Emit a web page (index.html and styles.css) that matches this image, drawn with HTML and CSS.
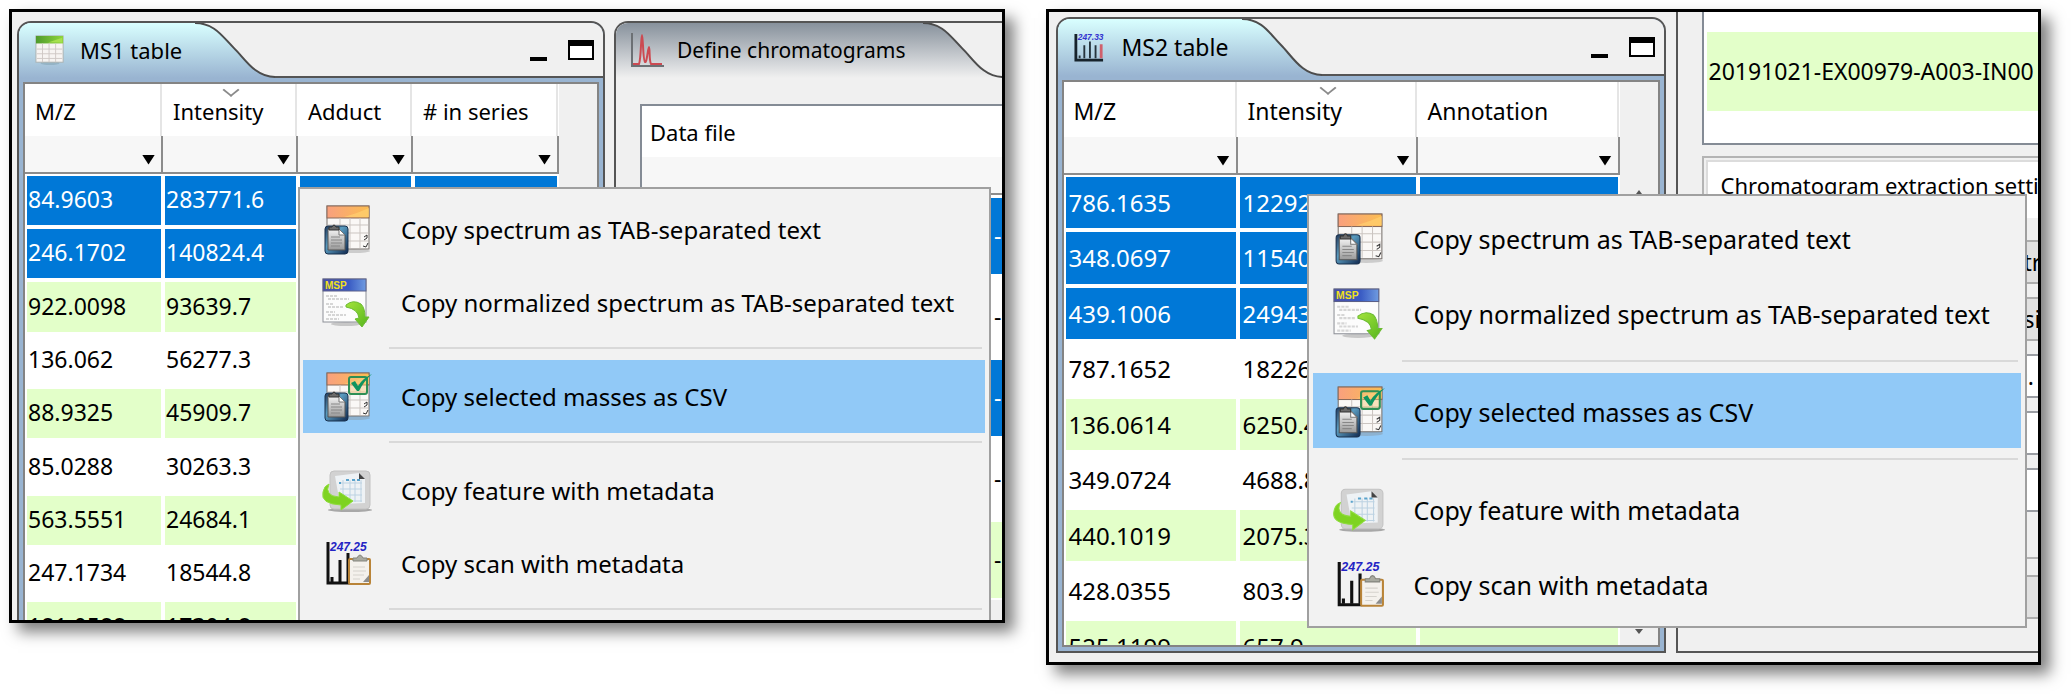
FILE: index.html
```html
<!DOCTYPE html>
<html lang="en">
<head>
<meta charset="utf-8">
<title>Copy selected masses</title>
<link rel="stylesheet" href="styles.css">
</head>
<body>
<svg class="defs" aria-hidden="true">
  <defs>
    <linearGradient id="g-blue" x1="0" y1="0" x2="0" y2="1"><stop offset="0" stop-color="#d9ffff"/><stop offset="1" stop-color="#99b4d1"/></linearGradient>
    <linearGradient id="g-gray" x1="0" y1="0" x2="0" y2="1"><stop offset="0" stop-color="#87919c"/><stop offset="1" stop-color="#f0f0f0"/></linearGradient>
    <linearGradient id="g-orange" x1="0" y1="0" x2="1" y2="0"><stop offset="0" stop-color="#f9a07e"/><stop offset="1" stop-color="#fbbd52"/></linearGradient>
    <linearGradient id="g-green" x1="0" y1="0" x2="1" y2="0"><stop offset="0" stop-color="#4f9a2c"/><stop offset="1" stop-color="#8fd63c"/></linearGradient>
    <linearGradient id="g-msp" x1="0" y1="0" x2="1" y2="0"><stop offset="0" stop-color="#4a4fa8"/><stop offset=".6" stop-color="#3a5cc4"/><stop offset="1" stop-color="#6f9be0"/></linearGradient>
    <linearGradient id="g-clip" x1="0" y1="0" x2="1" y2="1"><stop offset="0" stop-color="#223a5c"/><stop offset=".4" stop-color="#5a9cc0"/><stop offset="1" stop-color="#10284e"/></linearGradient>
    <linearGradient id="g-paper" x1="0" y1="0" x2="0" y2="1"><stop offset="0" stop-color="#f4f4f4"/><stop offset="1" stop-color="#999"/></linearGradient>
    <linearGradient id="g-arrow" x1="0" y1="0" x2="1" y2="1"><stop offset="0" stop-color="#a4e33c"/><stop offset="1" stop-color="#55b51e"/></linearGradient>
    <symbol id="slope-blue" viewBox="0 0 80 57" preserveAspectRatio="none">
      <path d="M0 0C20 0 28 15 39 26S60 56 80 56V57H0Z" fill="url(#g-blue)"/>
      <path d="M0 0C20 0 28 15 39 26S60 56 80 56" fill="none" stroke="#4c4c4c" stroke-width="2"/>
    </symbol>
    <symbol id="slope-gray" viewBox="0 0 80 57" preserveAspectRatio="none">
      <path d="M0 0C20 0 28 15 39 26S60 56 80 56V57H0Z" fill="url(#g-gray)"/>
      <path d="M0 0C20 0 28 15 39 26S60 56 80 56" fill="none" stroke="#4c4c4c" stroke-width="2"/>
    </symbol>
    <symbol id="i-sheet" viewBox="0 0 32 32">
      <ellipse cx="16" cy="30" rx="10" ry="2" fill="#7f9fae" opacity=".5"/>
      <rect x="1" y="1" width="29" height="28" fill="#f7f4f2" stroke="#a9b0b0"/>
      <rect x="1" y="1" width="29" height="8" fill="url(#g-green)"/>
      <path d="M14 8L29 3V8Z" fill="#a6e04e"/>
      <path d="M2 15H29M2 20H29M2 25H29M8 9V29M15 9V29M22 9V29" stroke="#cfc8c4" fill="none"/>
    </symbol>
    <symbol id="i-peaks" viewBox="0 0 34 36">
      <path d="M2 1V34H34" fill="none" stroke="#6c7074" stroke-width="2"/>
      <path d="M3 32H9C11 28 11 3 12 3S13 29 15 30S18 15 19 15S19 29 21 32H32" fill="none" stroke="#cc4a52" stroke-width="2"/>
    </symbol>
    <symbol id="i-spectrum" viewBox="0 0 32 32">
      <path d="M2 2V30H31" fill="none" stroke="#17232b" stroke-width="3"/>
      <path d="M11 14V28M17 10V28M23 14V28M6 25V28" stroke="#26343c" stroke-width="2"/>
      <path d="M29 13V28" stroke="#d0606c" stroke-width="3"/>
      <text x="4" y="8" class="glyph" font-size="9" fill="#3434d0">247.33</text>
    </symbol>
    <g id="sheet-clip">
      <ellipse cx="32" cy="46" rx="16" ry="2" fill="#888" opacity=".35"/>
      <rect x="5" y="1" width="42" height="43" fill="#faf8f6" stroke="#77716d"/>
      <rect x="5" y="1" width="42" height="12" fill="url(#g-orange)" stroke="#8a6a5a"/>
      <path d="M22 12Q34 9 47 3V12Z" fill="#ffd071" opacity=".7"/>
      <path d="M6 20H46M6 28H46M6 36H46M18 13V43M28 13V43M38 13V43" stroke="#cbc5c1" fill="none"/>
      <path d="M42 32L45 30V33L42 35M41 41L44 42L46 38" fill="none" stroke="#333" stroke-width="1"/>
      <rect x="3" y="21" width="23" height="28" rx="3" fill="url(#g-clip)" stroke="#19304d"/>
      <path d="M6 24H17L23 30V45H6Z" fill="url(#g-paper)" stroke="#555"/>
      <path d="M17 24V30H23Z" fill="#fff" stroke="#777"/>
      <path d="M9 32H18M9 35H20M9 38H20M9 41H18" stroke="#888"/>
      <path d="M7 25V22H10Q12 18 14 22H17V25Z" fill="#6b6b6b" stroke="#333"/>
    </g>
    <symbol id="i-copy" viewBox="0 0 50 50"><use href="#sheet-clip"/></symbol>
    <symbol id="i-csv" viewBox="0 0 50 50">
      <use href="#sheet-clip"/>
      <rect x="27" y="5" width="18" height="17" rx="2" fill="#f4c982" fill-opacity=".5" stroke="#2f8f55" stroke-width="2"/>
      <path d="M29 11L33 9L36 14Q41 6 50 2Q42 9 37 19H35Z" fill="#0f9460"/>
    </symbol>
    <symbol id="i-msp" viewBox="0 0 50 50">
      <ellipse cx="24" cy="46" rx="15" ry="2" fill="#888" opacity=".4"/>
      <rect x="1" y="1" width="43" height="43" fill="#fcfcfc" stroke="#8d9097"/>
      <rect x="1" y="1" width="43" height="12" fill="url(#g-msp)" stroke="#5a5f88"/>
      <text x="3" y="11" class="glyph glyph-upright" font-size="10" fill="#f0e01c">MSP</text>
      <path d="M4 18H15M6 21H27M4 26H12M6 29H22M4 34H13M6 37H24M4 41H17" stroke="#d6d6d6" stroke-width="2" stroke-dasharray="3 1"/>
      <path d="M24 27Q31 21 39 26Q43 30 43 39H47L40 49L33 41L37 40Q36 31 24 29Z" fill="url(#g-arrow)" stroke="#6cbb34"/>
    </symbol>
    <symbol id="i-feature" viewBox="0 0 50 50">
      <ellipse cx="28" cy="44" rx="22" ry="2" fill="#777" opacity=".6"/>
      <rect x="8" y="5" width="40" height="38" rx="4" fill="#d2d2d2" stroke="#c2c2c2"/>
      <path d="M13 10L37 7L43 13V37L18 38Z" fill="#eef2f5"/>
      <path d="M18 17H40M18 23H40M18 29H40M18 35H40M21 14V36M28 14V36M33 14V36M39 14V36" stroke="#bcd2e2" fill="none"/>
      <path d="M24 14H27M30 14H33M35 14H38M17 17H19" stroke="#5aa3cc" stroke-width="2"/>
      <path d="M37 7L43 13H37Z" fill="#444"/>
      <path d="M7 18Q2 30 17 31V26L31 35L19 44V39Q-2 38 1 26Q2 20 7 18Z" fill="#7ed321" stroke="#8fdc3e"/>
    </symbol>
    <symbol id="i-scan" viewBox="0 0 50 50">
      <path d="M6 3V44H28" fill="none" stroke="#111" stroke-width="3"/>
      <path d="M10 38V43M18 21V43M26 14V43" stroke="#111" stroke-width="3"/>
      <text x="8" y="12" class="glyph" font-size="12" fill="#2424c4">247.25</text>
      <rect x="27" y="20" width="21" height="25" rx="1" fill="#f4f1ec" stroke="#b98438" stroke-width="2"/>
      <path d="M31 28H43M31 32H44M31 36H42M31 40H38" stroke="#d5d2cc"/>
      <path d="M41 43L47 36V43Z" fill="#8c8c8c"/>
      <path d="M31 22V19H35Q38 13 41 19H45V22Z" fill="#a9aaa0" stroke="#83847c"/>
    </symbol>
    <symbol id="i-max" viewBox="0 0 26 20"><rect x="1" y="1" width="24" height="18" fill="#fff" stroke="#000" stroke-width="2"/><rect width="26" height="6"/></symbol>
  </defs>
</svg>

<main class="page">
  <section class="shot shot-ms1">
    <div class="workspace">
      <section class="panel panel-active">
        <header class="strip">
          <h2 class="tab"><svg class="tab-icon"><use href="#i-sheet"/></svg>MS1 table</h2>
          <svg class="slope"><use href="#slope-blue"/></svg>
          <div class="strip-rest">
            <button class="win-min" aria-label="Minimize"></button>
            <button class="win-max" aria-label="Maximize"><svg><use href="#i-max"/></svg></button>
          </div>
        </header>
        <div class="panel-body">
          <table class="grid">
            <colgroup><col class="c-138"><col class="c-135"><col class="c-115"><col class="c-146"></colgroup>
            <thead>
              <tr><th>M/Z</th><th class="sorted">Intensity</th><th>Adduct</th><th># in series</th></tr>
              <tr class="filters">
                <td><button aria-label="Filter M/Z"></button></td><td><button aria-label="Filter Intensity"></button></td>
                <td><button aria-label="Filter Adduct"></button></td><td><button aria-label="Filter # in series"></button></td>
              </tr>
            </thead>
            <tbody>
              <tr class="sel"><td>84.9603</td><td>283771.6</td><td></td><td></td></tr>
              <tr class="sel"><td>246.1702</td><td>140824.4</td><td></td><td></td></tr>
              <tr class="alt"><td>922.0098</td><td>93639.7</td><td></td><td></td></tr>
              <tr><td>136.062</td><td>56277.3</td><td></td><td></td></tr>
              <tr class="alt"><td>88.9325</td><td>45909.7</td><td></td><td></td></tr>
              <tr><td>85.0288</td><td>30263.3</td><td></td><td></td></tr>
              <tr class="alt"><td>563.5551</td><td>24684.1</td><td></td><td></td></tr>
              <tr><td>247.1734</td><td>18544.8</td><td></td><td></td></tr>
              <tr class="alt"><td>181.0588</td><td>17304.8</td><td></td><td></td></tr>
            </tbody>
          </table>
        </div>
      </section>
      <section class="panel panel-side">
        <header class="strip">
          <h2 class="tab tab-gray"><svg class="tab-icon tab-icon-wide"><use href="#i-peaks"/></svg>Define chromatograms</h2>
          <svg class="slope"><use href="#slope-gray"/></svg>
        </header>
        <table class="files">
          <thead><tr><th>Data file</th></tr><tr class="filters"><td></td></tr></thead>
          <tbody>
            <tr class="sel"><td>-C</td></tr>
            <tr><td>-C</td></tr>
            <tr class="sel"><td>-C</td></tr>
            <tr><td>-C</td></tr>
            <tr class="alt"><td>-C</td></tr>
          </tbody>
        </table>
      </section>
    </div>
    <div class="menu" role="menu">
      <button class="item" role="menuitem"><svg><use href="#i-copy"/></svg>Copy spectrum as TAB-separated text</button>
      <button class="item" role="menuitem"><svg><use href="#i-msp"/></svg>Copy normalized spectrum as TAB-separated text</button>
      <hr>
      <button class="item current" role="menuitem"><svg><use href="#i-csv"/></svg>Copy selected masses as CSV</button>
      <hr>
      <button class="item" role="menuitem"><svg><use href="#i-feature"/></svg>Copy feature with metadata</button>
      <button class="item" role="menuitem"><svg><use href="#i-scan"/></svg>Copy scan with metadata</button>
      <hr>
    </div>
  </section>

  <section class="shot shot-ms2">
    <div class="workspace">
      <section class="panel panel-active">
        <header class="strip">
          <h2 class="tab"><svg class="tab-icon"><use href="#i-spectrum"/></svg>MS2 table</h2>
          <svg class="slope"><use href="#slope-blue"/></svg>
          <div class="strip-rest">
            <button class="win-min" aria-label="Minimize"></button>
            <button class="win-max" aria-label="Maximize"><svg><use href="#i-max"/></svg></button>
          </div>
        </header>
        <div class="panel-body">
          <table class="grid">
            <colgroup><col class="c-174"><col class="c-180"><col class="c-202"></colgroup>
            <thead>
              <tr><th>M/Z</th><th class="sorted">Intensity</th><th>Annotation</th></tr>
              <tr class="filters">
                <td><button aria-label="Filter M/Z"></button></td><td><button aria-label="Filter Intensity"></button></td>
                <td><button aria-label="Filter Annotation"></button></td>
              </tr>
            </thead>
            <tbody>
              <tr class="sel"><td>786.1635</td><td>12292</td><td></td></tr>
              <tr class="sel"><td>348.0697</td><td>11540</td><td></td></tr>
              <tr class="sel"><td>439.1006</td><td>24943</td><td></td></tr>
              <tr><td>787.1652</td><td>18226</td><td></td></tr>
              <tr class="alt"><td>136.0614</td><td>6250.4</td><td></td></tr>
              <tr><td>349.0724</td><td>4688.8</td><td></td></tr>
              <tr class="alt"><td>440.1019</td><td>2075.3</td><td></td></tr>
              <tr><td>428.0355</td><td>803.9</td><td></td></tr>
              <tr class="alt"><td>525.1199</td><td>657.9</td><td></td></tr>
            </tbody>
          </table>
          <div class="scroll" aria-hidden="true"><svg viewBox="0 0 12 6"><path d="M3 6L6 2L9 6Z"/></svg><svg viewBox="0 0 12 6"><path d="M2 0L6 5L10 0Z"/></svg></div>
        </div>
      </section>
      <section class="panel panel-side">
        <div class="list"><p>20191021-EX00979-A003-IN00</p></div>
        <form class="group">
          <h3>Chromatogram extraction settings</h3>
          <div class="controls">
            <button type="button" class="field">tr</button>
            <button type="button" class="field">si</button>
            <input class="field" value="0." aria-label="Mass window">
            <input class="field" aria-label="Minimum retention">
            <input class="field" aria-label="Maximum retention">
          </div>
        </form>
        <button class="field apply" aria-label="Apply"></button>
      </section>
    </div>
    <div class="menu" role="menu">
      <button class="item" role="menuitem"><svg><use href="#i-copy"/></svg>Copy spectrum as TAB-separated text</button>
      <button class="item" role="menuitem"><svg><use href="#i-msp"/></svg>Copy normalized spectrum as TAB-separated text</button>
      <hr>
      <button class="item current" role="menuitem"><svg><use href="#i-csv"/></svg>Copy selected masses as CSV</button>
      <hr>
      <button class="item" role="menuitem"><svg><use href="#i-feature"/></svg>Copy feature with metadata</button>
      <button class="item" role="menuitem"><svg><use href="#i-scan"/></svg>Copy scan with metadata</button>
    </div>
  </section>
</main>
</body>
</html>
```
FILE: styles.css
```css
* { box-sizing: border-box; }
body { margin: 0; background: #fff; color: #000; font-family: "Noto Sans", "Open Sans", sans-serif; }
h2, h3, p { margin: 0; font-weight: 400; font-size: inherit; }
button, input { font: inherit; color: inherit; border: 0; padding: 0; margin: 0; border-radius: 0; background: none; }
.defs { position: absolute; width: 0; height: 0; }
.glyph { font-family: "Liberation Sans", sans-serif; font-weight: 700; font-style: italic; }
.glyph-upright { font-style: normal; }

.page { display: flex; align-items: flex-start; gap: 41px; min-height: 100vh; padding: 9px 30px 0 9px; }
.shot { position: relative; flex: 1 1 0; min-width: 0; overflow: hidden; border: 3px solid #000; background: #f0f0f0; box-shadow: 9px 9px 14px rgba(0, 0, 0, .5); }
.shot-ms1 { height: calc(100vh - 80px); font-size: 22px; }
.shot-ms2 { height: calc(100vh - 38px); font-size: 23px; }
.workspace { display: flex; }
.shot-ms1 .workspace { gap: 9px; padding: 9px 0 0 5px; }
.shot-ms2 .workspace { gap: 10px; height: 100%; padding: 5px 0 9px 7px; }

/* panels */
.panel { display: flex; flex-direction: column; border: 2px solid #555; }
.panel-active { flex: none; background: #99b4d1; border-radius: 14px 14px 0 0; overflow: hidden; }
.shot-ms1 .panel-active { width: 588px; }
.shot-ms2 .panel-active { width: 610px; }
.panel-side { flex: 1 1 0; min-width: 0; border-right: 0; overflow: hidden; }
.shot-ms1 .panel-side { border-radius: 14px 0 0 0; }
.strip { display: flex; flex: none; height: 55px; background: #f0f0f0; }
.shot-ms2 .strip { height: 57px; }
.tab { display: flex; flex: none; align-items: center; gap: 15px; width: 176px; padding: 0 0 2px 16px; background: linear-gradient(#d9ffff, #99b4d1); white-space: nowrap; }
.shot-ms2 .tab { width: 184px; gap: 18px; }
.shot-ms1 .tab-gray { width: 307px; gap: 13px; padding-left: 14px; font-size: 21px; background: linear-gradient(#87919c, #f0f0f0); }
.tab-icon { flex: none; width: 30px; height: 32px; }
.tab-icon-wide { width: 34px; height: 36px; }
.slope { flex: none; width: 80px; height: 100%; }
.strip-rest { display: flex; flex: 1; justify-content: flex-end; align-items: center; gap: 21px; padding-right: 9px; border-bottom: 2px solid #555; }
.win-min { width: 17px; height: 4px; margin-top: 18px; background: #000; }
.win-max, .win-max svg { display: block; width: 26px; height: 20px; }
.panel-body { display: flex; flex: 1 1 auto; min-height: 0; margin: 4px; border: 2px solid #848484; background: #f0f0f0; overflow: hidden; }

/* tables */
.grid { flex: none; align-self: flex-start; table-layout: fixed; border-collapse: separate; border-spacing: 0; background: #fff; }
.shot-ms1 .grid { width: 534px; }
.shot-ms2 .grid { width: 556px; }
.c-138 { width: 138px; } .c-135 { width: 135px; } .c-115 { width: 115px; } .c-146 { width: 146px; }
.c-174 { width: 174px; } .c-180 { width: 180px; } .c-202 { width: 202px; }
th { position: relative; height: 52px; padding: 2px 0 0 10px; text-align: left; font-weight: 400; line-height: 28px; background: #fff linear-gradient(#e5e5e5, #e5e5e5) right 1px top / 2px 100% no-repeat; }
.shot-ms2 th { height: 55px; padding-top: 3px; }
.sorted::before { content: ""; position: absolute; top: 0; left: calc(50% - 6px); width: 10px; height: 10px; border: solid #8a8a8a; border-width: 0 2px 2px 0; transform: scaleY(.8) rotate(45deg); }
.filters td { height: 38px; padding: 0; border: solid #8c8c8c; border-width: 0 2px 2px 0; background: #f7f7f7; }
.filters button { display: block; width: 13px; height: 10px; margin: 11px 6px 0 auto; background: #000; clip-path: polygon(0 0, 100% 0, 50% 100%); }
tbody td { height: 53px; padding: 0 0 3px 1px; border: 2px solid #fff; font-size: 23px; line-height: 28px; white-space: nowrap; }
.shot-ms1 .grid tbody tr:nth-child(3n) td { height: 54px; }
.shot-ms2 .grid tbody td { height: 55px; padding: 0 0 0 3px; font-size: 24px; }
.shot-ms2 .grid tbody tr:nth-child(even) td { height: 56px; }
.sel td { background: #0078d7; color: #fff; }
.alt td { background: #e3ffc9; }
.scroll { display: flex; flex: 1; flex-direction: column; justify-content: space-between; align-items: center; padding: 106px 0 10px; }
.scroll svg { width: 12px; height: 6px; fill: #555; }

.files { margin: 26px 0 0 24px; border: solid #848b95; border-width: 2px 0 0 2px; border-spacing: 0; background: #fff; }
.files th { height: 51px; padding: 1px 0 0 8px; background: #fff; }
.files .filters td { border-right: 0; }
.files tbody td { height: 81px; padding-left: 350px; border-width: 3px 0 2px 2px; }

/* extraction settings */
.shot-ms2 .panel-side { margin-top: -5px; border-top: 0; }
.list { flex: none; height: 133px; margin-left: 24px; padding: 20px 0 0 3px; border: solid #848b95; border-width: 0 0 2px 2px; background: #fff; }
.list p { padding-left: 2px; line-height: 79px; background: #e3ffc9; white-space: nowrap; overflow: hidden; }
.group { flex: none; margin: 11px 0 0 24px; padding: 2px 0 5px 2px; border: solid #b4b4b4; border-width: 2px 0 2px 2px; background: #f0f0f0; }
.group h3 { height: 58px; padding: 7px 0 0 13px; border: solid #dcdcdc; border-width: 2px 0 0 2px; font-size: 22px; line-height: 32px; background: #fff; white-space: nowrap; overflow: hidden; }
.controls { display: flex; flex-direction: column; gap: 13px; padding: 22px 0 40px; }
.field { height: 44px; padding: 0 0 0 318px; border: solid #adadad; border-width: 2px 0; background: #e1e1e1; text-align: left; white-space: nowrap; overflow: hidden; }
input.field { padding-left: 309px; background: #fff; border-color: #9a9da3; }
.apply { margin: 16px 0 0 24px; }

/* context menu */
.menu { position: absolute; display: flex; flex-direction: column; border: 2px solid #a0a0a0; background: #f2f2f2; font-size: 24px; }
.shot-ms1 .menu { left: 286px; right: 11px; top: 175px; padding: 4px 4px 4px 3px; }
.shot-ms2 .menu { left: 258px; right: 11px; top: 182px; padding: 4px 4px 5px; font-size: 25px; }
.item { display: flex; align-items: center; gap: 29px; height: 73px; padding-left: 19px; text-align: left; white-space: nowrap; }
.item svg { flex: none; width: 50px; height: 50px; }
.shot-ms2 .item { height: 75px; padding: 2px 0 0 20px; }
.shot-ms2 .item svg { width: 52px; height: 52px; }
.current { background: #91c9f7; }
.menu hr { height: 2px; margin: 8px 3px 11px 86px; border: 0; background: #d9d9d9; }
.shot-ms2 .menu hr { margin: 10px 3px 11px 89px; }
```
